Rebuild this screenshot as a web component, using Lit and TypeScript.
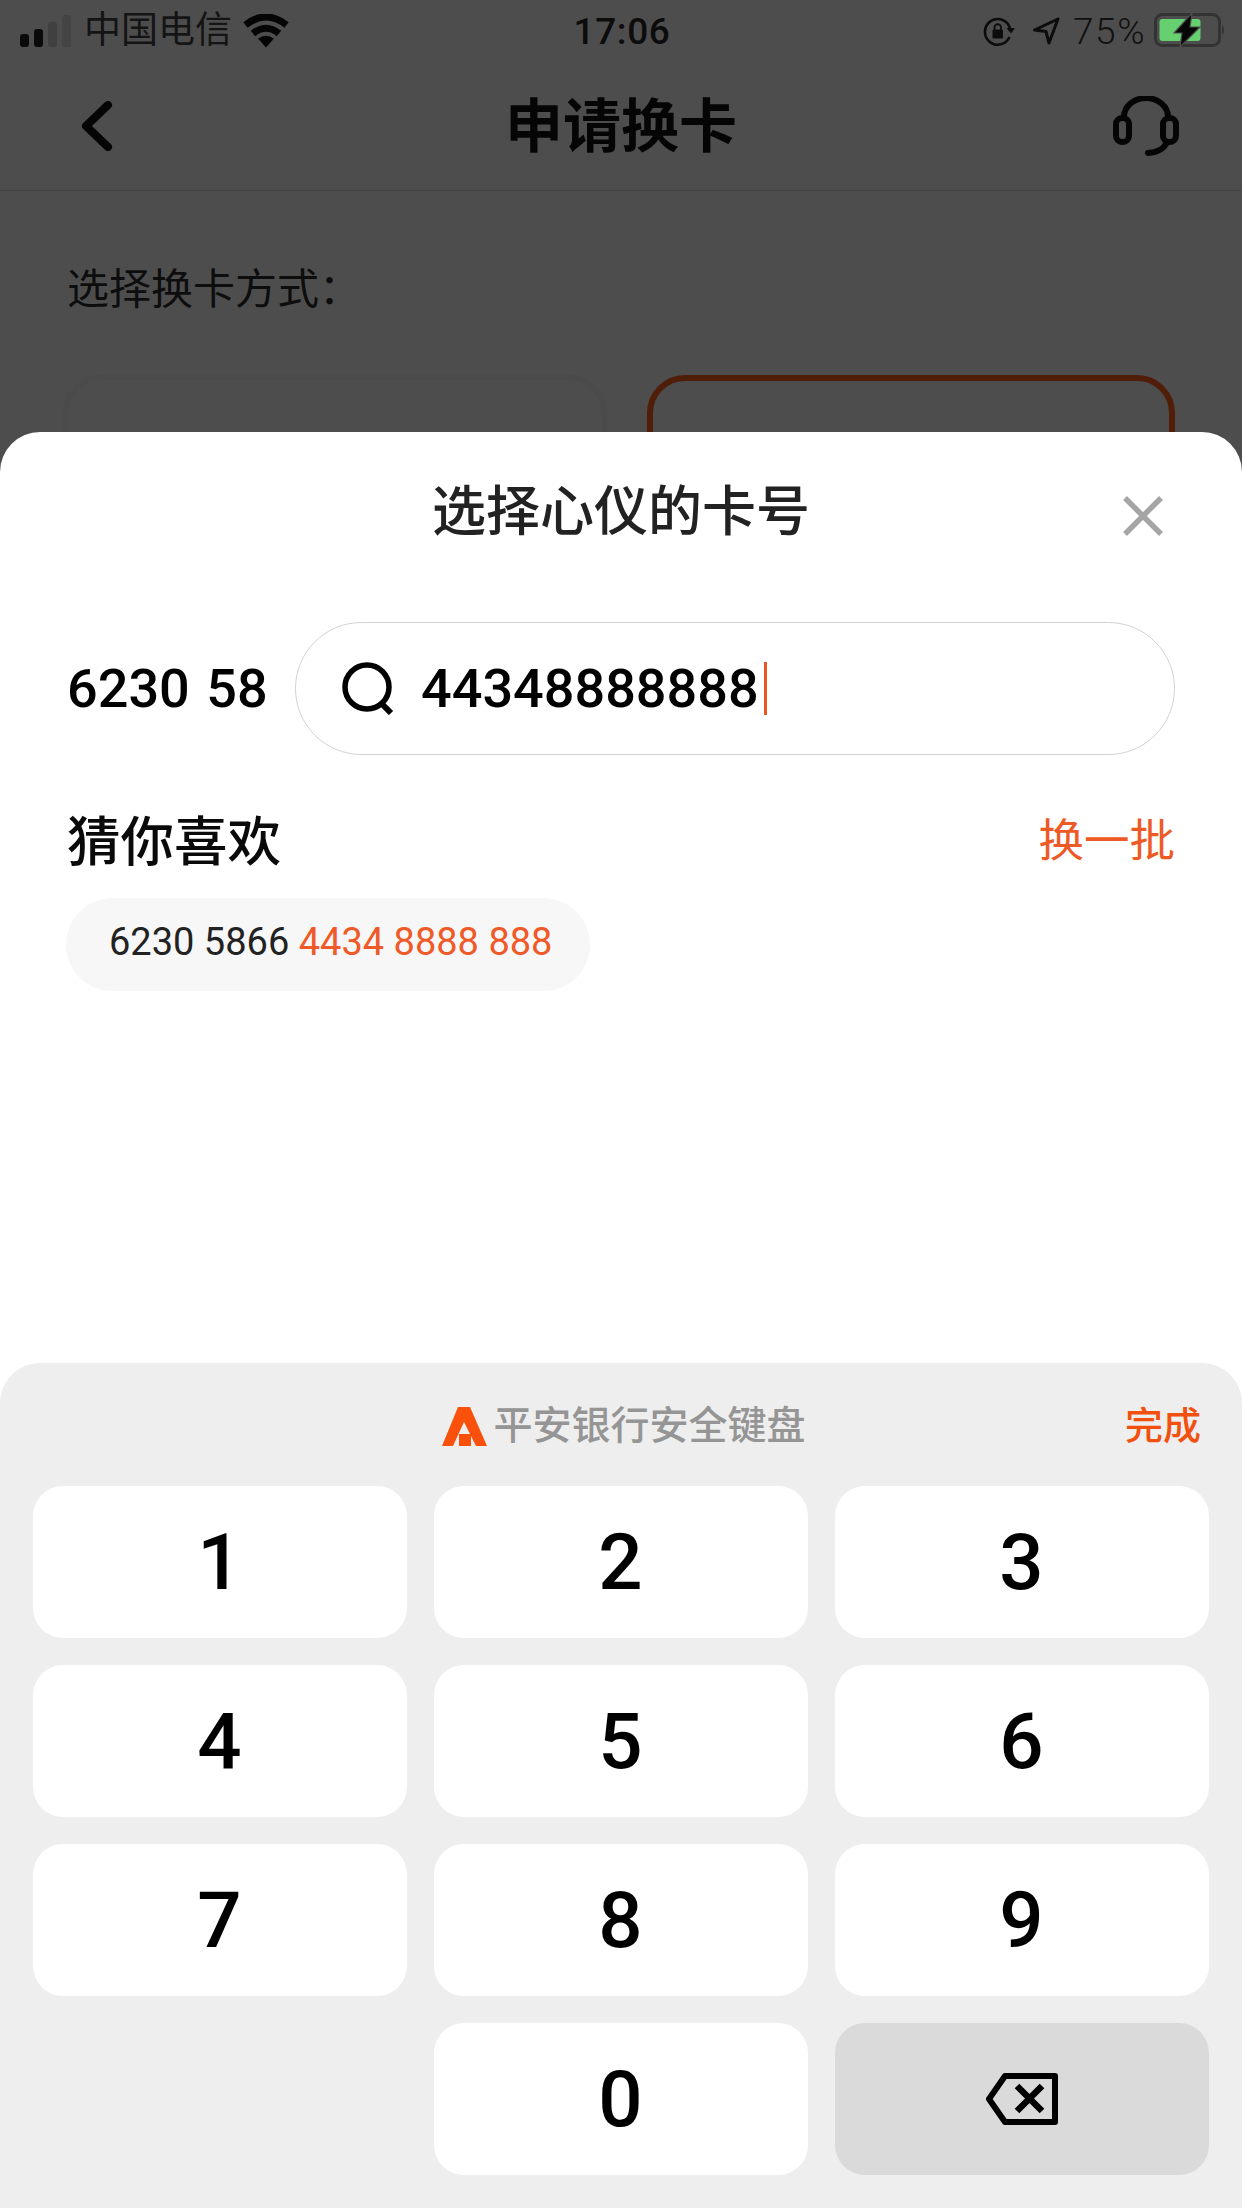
import { LitElement, html, css } from "lit";
import { customElement } from "lit/decorators.js";

const KEYS = ["1", "2", "3", "4", "5", "6", "7", "8", "9", "", "0", "del"];

@customElement("app-root")
export class AppRoot extends LitElement {
  static styles = css`
    :host {
      display: block;
      position: relative;
      width: 1242px;
      height: 2208px;
      overflow: hidden;
      background: #4d4d4d;
      color: #0c0c0c;
      font-family: Roboto, "Noto Sans CJK SC", sans-serif;
    }
    svg { display: block; }
    .status {
      height: 62px;
      display: grid;
      grid-template-columns: 1fr auto 1fr;
      align-items: center;
      padding: 0 16px 0 20px;
      box-sizing: border-box;
    }
    .st-left { display: flex; align-items: center; }
    .carrier { font-size: 37px; line-height: 40px; margin: 0 11px 0 13px; color: #141414; }
    .time { font-size: 37px; font-weight: 500; letter-spacing: 0.6px; color: #0c0c0c; margin-left: -2px; }
    .st-right { display: flex; align-items: center; justify-content: flex-end; }
    .pct { font-size: 37px; font-weight: 300; letter-spacing: 1.5px; margin: 0 8px 0 12px; color: #111; }
    .lock { margin: 2px 16px 0 0; }
    .nav {
      height: 129px;
      border-bottom: 1px solid #444;
      box-sizing: border-box;
      display: grid;
      grid-template-columns: 1fr auto 1fr;
      align-items: center;
      padding: 0 63px;
    }
    .back { margin-left: 18px; }
    .nav-title { font-size: 58px; font-weight: 700; line-height: 70px; color: #050505; margin-top: 2px; }
    .headset { justify-self: end; }
    .method { font-size: 42px; line-height: 60px; margin: 69px 67px 0; color: #0d0d0d; }
    .cards {
      display: grid;
      grid-template-columns: 1fr 1fr;
      gap: 52px;
      padding: 0 67px;
      margin-top: 55px;
    }
    .card { height: 200px; box-sizing: border-box; border-radius: 38px; }
    .card.plain { border: 5px solid #4b4b4b; margin: 0 -12px 0 -4px; }
    .card.on { border: 6px solid #4f1d08; }

    .sheet {
      position: absolute;
      left: 0;
      right: 0;
      top: 432px;
      bottom: 0;
      background: #fff;
      border-radius: 40px 40px 0 0;
      display: flex;
      flex-direction: column;
    }
    .sheet-head {
      height: 156px;
      display: grid;
      grid-template-columns: 1fr auto 1fr;
      align-items: center;
      padding: 0 79px;
    }
    .sheet-title { grid-column: 2; font-size: 54px; font-weight: 500; color: #222; line-height: 64px; margin-top: 5px; }
    .close { justify-self: end; margin-top: 11px; }
    .row { display: flex; align-items: center; padding: 0 67px; margin-top: 34px; }
    .prefix {
      width: 228px;
      flex: none;
      font-size: 54px;
      font-weight: 500;
      color: #000;
      word-spacing: 3px;
    }
    .input {
      flex: 1;
      height: 133px;
      box-sizing: border-box;
      border: 1px solid #d2d2d2;
      border-radius: 67px;
      display: flex;
      align-items: center;
      padding-left: 46px;
    }
    .typed { font-size: 54px; font-weight: 500; color: #000; margin-left: 27px; }
    .caret { width: 3px; height: 53px; background: #e9561f; margin-left: 5px; }
    .sec {
      display: flex;
      justify-content: space-between;
      align-items: center;
      padding: 0 67px;
      margin-top: 52px;
      height: 60px;
    }
    .sec-title { font-size: 53.5px; font-weight: 500; color: #0a0a0a; }
    .refresh { font-size: 45.5px; color: #ee5a26; }
    .chip {
      align-self: flex-start;
      margin: 31px 0 0 66px;
      height: 93px;
      box-sizing: border-box;
      display: flex;
      align-items: center;
      padding: 0 38px 6px 43px;
      background: #f7f7f7;
      border-radius: 47px;
      font-size: 38px;
      color: #222;
      white-space: pre;
    }
    .chip b { font-weight: 400; color: #ef5a28; }

    .kb {
      margin-top: auto;
      height: 845px;
      box-sizing: border-box;
      background: #eeeeee;
      border-radius: 40px 40px 0 0;
      padding: 0 33px;
    }
    .kb-head {
      height: 123px;
      display: grid;
      grid-template-columns: 1fr auto 1fr;
      align-items: center;
    }
    .brand {
      grid-column: 2;
      display: flex;
      align-items: center;
      gap: 6px;
      margin-left: 6px;
      font-size: 39px;
      font-weight: 500;
      color: #959595;
    }
    .brand svg { margin-top: 4px; }
    .brand span { margin-top: -5px; }
    .done { justify-self: end; font-size: 38px; font-weight: 500; color: #f2500f; margin: -5px 8px 0 0; }
    .keys {
      display: grid;
      grid-template-columns: repeat(3, 1fr);
      grid-auto-rows: 152px;
      column-gap: 27px;
      row-gap: 27px;
    }
    .key {
      background: #fff;
      border-radius: 30px;
      display: flex;
      align-items: center;
      justify-content: center;
      font-size: 78px;
      font-weight: 500;
      color: #000;
      padding-right: 1px;
    }
    .key.blank { background: transparent; }
    .key.del { background: #dadada; }
  `;

  private signal() {
    return html`<svg width="51" height="32" viewBox="0 0 51 32">
      <rect x="0" y="19" width="9" height="13" rx="3" fill="#0a0a0a"/>
      <rect x="14" y="14" width="9" height="18" rx="3" fill="#0a0a0a"/>
      <rect x="28" y="7" width="9" height="25" rx="3" fill="#404040"/>
      <rect x="42" y="0" width="9" height="32" rx="3" fill="#444444"/>
    </svg>`;
  }

  private wifi() {
    return html`<svg width="46" height="34" viewBox="0 0 46 34">
      <path d="M23 33.5 L15 24.5 Q23 19 31 24.5 Z" fill="#050505"/>
      <path d="M10 19.5 Q23 9 36 19.5" fill="none" stroke="#050505" stroke-width="7"/>
      <path d="M2.5 11 Q23 -5 43.5 11" fill="none" stroke="#050505" stroke-width="7"/>
    </svg>`;
  }

  private lock() {
    return html`<svg class="lock" width="33" height="30" viewBox="0 0 33 30">
      <path d="M26.5 20 A12.8 12.8 0 1 1 27 11" fill="none" stroke="#0c0c0c" stroke-width="2.6"/>
      <path d="M23.5 11 L32 11 L28 16.5 Z" fill="#0c0c0c"/>
      <rect x="9.5" y="12.5" width="10.5" height="9" rx="1.3" fill="#0c0c0c"/>
      <path d="M11.5 13 V10.5 A3.2 3.2 0 0 1 18 10.5 V13" fill="none" stroke="#0c0c0c" stroke-width="1.8"/>
    </svg>`;
  }

  private arrow() {
    return html`<svg width="29" height="28" viewBox="0 0 29 28">
      <path d="M26 2 L2.5 13 L14 14.5 L17 26 Z" fill="none" stroke="#0c0c0c" stroke-width="3" stroke-linejoin="round"/>
    </svg>`;
  }

  private battery() {
    return html`<svg width="72" height="36" viewBox="0 0 72 36">
      <rect x="1.5" y="1.5" width="64" height="31" rx="7" fill="none" stroke="#333" stroke-width="3"/>
      <rect x="5.5" y="6" width="41" height="22" rx="3" fill="#66cf70"/>
      <path d="M68 12 Q72 17 68 22 Z" fill="#333"/>
      <path d="M38 0 L20 20 L28 20 L26 34 L46 14 L36 14 Z" fill="#060606" stroke="#4d4d4d" stroke-width="1.2"/>
    </svg>`;
  }

  private backspace() {
    return html`<svg width="72" height="52" viewBox="0 0 72 52">
      <path d="M69 3 H19 L3 26 L19 49 H69 Z" fill="none" stroke="#000" stroke-width="6" stroke-linejoin="round"/>
      <path d="M31 13 L56 38 M56 13 L31 38" stroke="#000" stroke-width="6.5" fill="none"/>
    </svg>`;
  }

  private keyCell(k: string) {
    if (k === "") return html`<div class="key blank"></div>`;
    if (k === "del") return html`<div class="key del">${this.backspace()}</div>`;
    return html`<div class="key">${k}</div>`;
  }

  render() {
    return html`
      <div class="status">
        <div class="st-left">
          ${this.signal()}
          <span class="carrier">中国电信</span>
          ${this.wifi()}
        </div>
        <div class="time">17:06</div>
        <div class="st-right">
          ${this.lock()} ${this.arrow()}
          <span class="pct">75%</span>
          ${this.battery()}
        </div>
      </div>
      <div class="nav">
        <svg class="back" width="32" height="50" viewBox="0 0 32 50">
          <path d="M27 4 L5 25 L27 46" fill="none" stroke="#050505" stroke-width="8" stroke-linecap="round" stroke-linejoin="round"/>
        </svg>
        <div class="nav-title">申请换卡</div>
        <svg class="headset" width="66" height="60" viewBox="0 0 66 60">
          <path d="M11 24 V21 A22 19 0 0 1 55 21 V24" fill="none" stroke="#050505" stroke-width="6"/>
          <rect x="3" y="22" width="13" height="24" rx="6" fill="none" stroke="#050505" stroke-width="6"/>
          <rect x="50" y="22" width="13" height="24" rx="6" fill="none" stroke="#050505" stroke-width="6"/>
          <path d="M54 46 Q50 56 35 57" fill="none" stroke="#050505" stroke-width="6" stroke-linecap="round"/>
        </svg>
      </div>
      <div class="method">选择换卡方式：</div>
      <div class="cards">
        <div class="card plain"></div>
        <div class="card on"></div>
      </div>

      <div class="sheet">
        <div class="sheet-head">
          <div class="sheet-title">选择心仪的卡号</div>
          <svg class="close" width="40" height="40" viewBox="0 0 40 40">
            <path d="M2 2 L38 38 M38 2 L2 38" stroke="#a5a5a5" stroke-width="5.5" fill="none"/>
          </svg>
        </div>
        <div class="row">
          <div class="prefix">6230 58</div>
          <div class="input">
            <svg width="52" height="53" viewBox="0 0 52 53">
              <circle cx="25" cy="25" r="22" fill="none" stroke="#000" stroke-width="5.5"/>
              <path d="M39 41 L49 51" stroke="#000" stroke-width="6" fill="none"/>
            </svg>
            <span class="typed">44348888888</span>
            <span class="caret"></span>
          </div>
        </div>
        <div class="sec">
          <span class="sec-title">猜你喜欢</span>
          <span class="refresh">换一批</span>
        </div>
        <div class="chip">6230 5866 <b>4434 8888 888</b></div>

        <div class="kb">
          <div class="kb-head">
            <div class="brand">
              <svg width="45" height="39" viewBox="0 0 45 39">
                <path d="M16 0 H28 L45 39 H34 L22 15 L11 39 H0 Z" fill="#f9510b"/>
                <rect x="17" y="27" width="12" height="12" fill="#f9510b"/>
              </svg>
              <span>平安银行安全键盘</span>
            </div>
            <span class="done">完成</span>
          </div>
          <div class="keys">${KEYS.map((k) => this.keyCell(k))}</div>
        </div>
      </div>
    `;
  }
}
